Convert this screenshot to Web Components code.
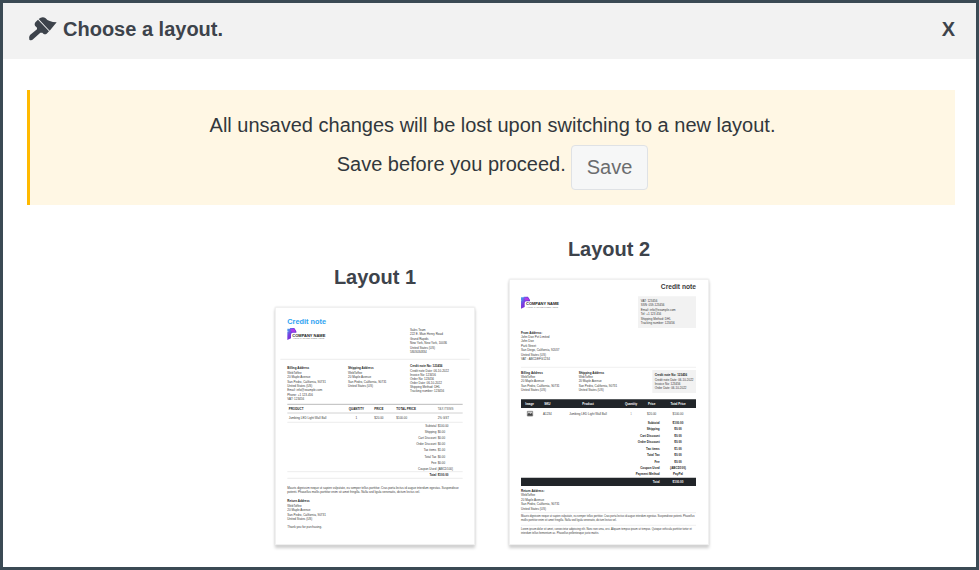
<!DOCTYPE html>
<html lang="en">
<head>
<meta charset="utf-8">
<title>Choose a layout</title>
<style>
    body {
        margin: 0;
        font-family: "Liberation Sans", Arial, sans-serif;
        font-size: 20px;
        color: #32373c;
        --frame-color: #3b4a54;
        --heading-color: #3d434b;
    }
</style>
</head>
<body>
<layout-dialog>
    <span slot="title">Choose a layout.</span>
    <save-notice>
        <span slot="message">All unsaved changes will be lost upon switching to a new layout.</span>
        <span slot="hint">Save before you proceed.</span>
    </save-notice>
    <layout-list>
        <layout-card>
            <span slot="name">Layout 1</span>
            <credit-note-plain></credit-note-plain>
        </layout-card>
        <layout-card>
            <span slot="name">Layout 2</span>
            <credit-note-dark></credit-note-dark>
        </layout-card>
    </layout-list>
</layout-dialog>

<script>
class LayoutDialog extends HTMLElement {

    constructor() {
        super();

        this.attachShadow({ mode: 'open' });
        this.shadowRoot.innerHTML = `
            <style>
                :host {
                    display: block;
                    box-sizing: border-box;
                    min-height: 100vh;
                    border: 3px solid var(--frame-color);
                    background-color: #fff;
                }
                header {
                    display: flex;
                    align-items: center;
                    gap: 6px;
                    box-sizing: border-box;
                    height: 56px;
                    padding: 0 21px 4px 24px;
                    background-color: #f2f2f2;
                    color: var(--heading-color);
                }
                h1 {
                    flex: 1;
                    margin: 0;
                    font-size: 20px;
                    line-height: 24px;
                }
                svg {
                    width: 30px;
                    height: 26px;
                }
                button {
                    border: 0;
                    padding: 0;
                    background: none;
                    color: inherit;
                    font: bold 20px/24px "Liberation Sans", Arial, sans-serif;
                    cursor: pointer;
                }
                main {
                    padding: 31px 21px 20px 24px;
                }
            </style>
            <header>
                <svg viewBox="0 0 90 78" fill="currentColor" aria-hidden="true">
                    <path d="M35 9 41 5Q49 1 56 7Q64 18 89 19L68 44Z" />
                    <path d="M33 11 66 46 59 53Q54 57 49 53L46 50 40 50 19 69Q13 75 7 71Q4 64 9 57L30 40V35L24 29Q21 24 25 19Z" />
                </svg>
                <h1><slot name="title"></slot></h1>
                <button type="button" aria-label="Close">X</button>
            </header>
            <main><slot></slot></main>
        `;
    }
}

class SaveNotice extends HTMLElement {

    constructor() {
        super();

        this.attachShadow({ mode: 'open' });
        this.shadowRoot.innerHTML = `
            <style>
                :host {
                    display: block;
                    padding: 16px 0 15px;
                    border-left: 3px solid #ffb900;
                    background-color: #fff7e4;
                    text-align: center;
                }
                p {
                    margin: 0;
                    line-height: 39px;
                }
                .row {
                    display: flex;
                    justify-content: center;
                    gap: 5px;
                }
                button {
                    box-sizing: border-box;
                    height: 45px;
                    padding: 0 15px;
                    border: 1px solid #dfe2e5;
                    border-radius: 4px;
                    background-color: #f6f7f7;
                    color: #6b6c6e;
                    font: 20px "Liberation Sans", Arial, sans-serif;
                    cursor: pointer;
                }
            </style>
            <p><slot name="message"></slot></p>
            <div class="row">
                <p><slot name="hint"></slot></p>
                <button type="button">Save</button>
            </div>
        `;
    }
}

class LayoutList extends HTMLElement {

    constructor() {
        super();

        this.attachShadow({ mode: 'open' });
        this.shadowRoot.innerHTML = `
            <style>
                :host {
                    display: flex;
                    flex-wrap: wrap;
                    justify-content: center;
                    align-items: flex-end;
                    gap: 34px;
                    padding: 32px 0 0 2px;
                }
            </style>
            <slot></slot>
        `;
    }
}

class LayoutCard extends HTMLElement {

    constructor() {
        super();

        this.attachShadow({ mode: 'open' });
        this.shadowRoot.innerHTML = `
            <style>
                :host {
                    display: block;
                    width: 200px;
                }
                h2 {
                    margin: 0 0 18px;
                    color: var(--heading-color);
                    font-size: 20px;
                    line-height: 24px;
                    text-align: center;
                }
                button {
                    display: block;
                    box-sizing: border-box;
                    width: 100%;
                    padding: 0;
                    border: 0;
                    background-color: #fff;
                    box-shadow: inset 0 0 0 1px #f0f0f0, 0 0 2px #ddd, 0 3px 3px #ccc;
                    font: inherit;
                    cursor: pointer;
                }
            </style>
            <h2 id="name"><slot name="name"></slot></h2>
            <button type="button" aria-labelledby="name"><slot></slot></button>
        `;
    }
}

// The previews are drawn three units to the pixel.
const previewStyle = `
    :host {
        display: block;
    }
    svg {
        display: block;
        width: 100%;
        font-family: "Liberation Sans", Arial, sans-serif;
        font-size: 9px;
        fill: #3a3a3a;
    }
    .bold { font-weight: bold; fill: #222; }
    .title { font-size: 22px; font-weight: bold; }
    .end { text-anchor: end; }
    .mid { text-anchor: middle; }
    .light { fill: #999; }
    .white { fill: #fff; font-weight: bold; }
    .small { font-size: 8px; }
    .brand { font-size: 12px; font-weight: bold; fill: #222; }
    .tagline { font-size: 7px; fill: #888; }
`;

const lines = (x, y, step, rows, name = '') => rows.map((row, i) =>
    `<text x="${x}" y="${y + Math.round(i * step)}" class="${name}">${row}</text>`
).join('');

const cells = (y, row, name = '') => row.map(([x, text, extra = '']) =>
    `<text x="${x}" y="${y}" class="${name} ${extra}">${text}</text>`
).join('');

const logo = (x, y) => `
    <g transform="translate(${x} ${y})">
        <defs>
            <linearGradient id="mark" x1="0" y1="0" x2="1" y2="1">
                <stop offset="0" stop-color="#3cb4f0" />
                <stop offset=".4" stop-color="#7a3be0" />
                <stop offset="1" stop-color="#6a1fb5" />
            </linearGradient>
        </defs>
        <path fill="url(#mark)" d="M0 2H8V10H0ZM8 0H21L27 10V14H16Q11 14 11 20V31L0 36V11L8 9Z" />
        <path fill="#b13be8" d="M9 3H20L25 11H13Z" />
        <text x="15" y="26" class="brand">COMPANY NAME</text>
        <text x="16" y="34" class="tagline">YOUR TAGLINE GOES HERE</text>
    </g>
`;

class CreditNotePlain extends HTMLElement {

    constructor() {
        super();

        this.attachShadow({ mode: 'open' });
        this.shadowRoot.innerHTML = `
            <style>${previewStyle}
                .title { fill: #2ea3f2; }
            </style>
            <svg viewBox="0 0 600 714">
                <text x="37" y="51" class="title">Credit note</text>
                ${logo(37, 63)}
                ${lines(405, 71, 13.4, ['Sales Team', '222 E. Main Henry Road', 'Grand Rapids', 'New York, New York, 10036', 'United States (US)', '5803034834'])}
                <path stroke="#e4e4e4" stroke-width="2" d="M16 157H584" />

                ${lines(37, 185, 13, ['Billing Address'], 'bold')}
                ${lines(37, 201, 13, ['WebToffee', '20 Maple Avenue', 'San Pedro, California, 90731', 'United States (US)', 'Email: info@example.com', 'Phone: +1 123-456', 'VAT: 123456'])}
                ${lines(219, 185, 13, ['Shipping Address'], 'bold')}
                ${lines(219, 201, 13, ['WebToffee', '20 Maple Avenue', 'San Pedro, California, 90731', 'United States (US)'])}
                ${lines(405, 181, 12, ['Credit note No: 123456'], 'bold')}
                ${lines(405, 194, 12, ['Credit note Date: 06-10-2022', 'Invoice No: 123456', 'Order No: 123456', 'Order Date: 06-10-2022', 'Shipping Method: DHL', 'Tracking number: 123456'])}

                <path stroke="#999" stroke-width="2" d="M37 292H563" />
                ${cells(310, [[41, 'PRODUCT'], [244, 'QUANTITY', 'mid'], [298, 'PRICE'], [364, 'TOTAL PRICE'], [488, 'TAX ITEMS', 'light']], 'bold')}
                <path stroke="#bbb" stroke-width="2" d="M37 318H563" />
                ${cells(337, [[41, 'Jumbing LED Light Wall Ball'], [244, '1', 'mid'], [298, '$20.00'], [364, '$100.00'], [488, '2% GST']])}
                <path stroke="#e4e4e4" stroke-width="2" d="M37 346H563" />

                ${lines(484, 359, 18.6, ['Subtotal', 'Shipping', 'Cart Discount', 'Order Discount', 'Tax items', 'Total Tax', 'Fee', 'Coupon Used'], 'end')}
                ${lines(488, 359, 18.6, ['$100.00', '$0.00', '$0.00', '$0.00', '$1.00', '$0.00', '$0.00', '{ABCD100}'])}
                <path stroke="#e4e4e4" stroke-width="2" d="M37 494H563M37 514H563" />
                ${cells(508, [[484, 'Total', 'end'], [488, '$100.00']], 'bold')}

                ${lines(37, 545, 14, ['Mauris dignissim neque ut sapien vulputate, eu semper tellus porttitor. Cras porta lectus id augue interdum egestas. Suspendisse', 'potenti. Phasellus mollis porttitor enim sit amet fringilla. Nulla sed ligula venenatis, dictum lectus vel.'])}
                ${lines(37, 585, 14, ['Return Address'], 'bold')}
                ${lines(37, 600, 13.4, ['WebToffee', '20 Maple Avenue', 'San Pedro, California, 90731', 'United States (US)'])}
                ${lines(37, 662, 13, ['Thank you for purchasing.'])}
            </svg>
        `;
    }
}

class CreditNoteDark extends HTMLElement {

    constructor() {
        super();

        this.attachShadow({ mode: 'open' });
        this.shadowRoot.innerHTML = `
            <style>${previewStyle}
                .title { font-size: 20px; }
                .bar { fill: #212529; }
                .box { fill: #f2f2f2; }
            </style>
            <svg viewBox="0 0 600 798">
                <text x="561" y="30" class="title end">Credit note</text>
                ${logo(36, 53)}
                <path class="box" d="M387 52H561V147H387Z" />
                ${lines(395, 69, 13.4, ['VAT: 123456', 'SSN: 059-123456', 'Email: info@example.com', 'Tel: +1 123 456', 'Shipping Method: DHL', 'Tracking number: 123456'])}

                ${lines(36, 164, 13, ['From Address:'], 'bold')}
                ${lines(36, 177, 13.2, ['John Doe Pvt Limited', 'John Doe', 'Park Street', 'San Diego, California, 92037', 'United States (US)', 'VAT : ABCDEFG1234'])}
                <path stroke="#e8e8e8" stroke-width="2" d="M36 265H561" />

                ${lines(36, 284, 13, ['Billing Address'], 'bold')}
                ${lines(36, 297, 13.2, ['WebToffee', '20 Maple Avenue', 'San Pedro, California, 90731', 'United States (US)'])}
                ${lines(209, 284, 13, ['Shipping Address'], 'bold')}
                ${lines(209, 297, 13.2, ['WebToffee', '20 Maple Avenue', 'San Pedro, California, 90731', 'United States (US)'])}
                <path class="box" d="M430 273H561V342H430Z" />
                ${lines(437, 291, 13, ['Credit note No: 123456'], 'bold')}
                ${lines(437, 305, 13.2, ['Credit note Date: 06-10-2022', 'Invoice No: 123456', 'Order Date: 06-10-2022'])}

                <path class="bar" d="M36 361H561V387H36Z" />
                ${cells(377, [[62, 'Image'], [115, 'SKU'], [237, 'Product'], [366, 'Quantity'], [428, 'Price'], [507, 'Total Price']], 'white mid')}
                <path fill="#ccc" stroke="#666" stroke-width="2" d="M55 397H71V411H55Z" />
                <path fill="#444" d="M56 410V405L60 401 64 405 68 402 70 405V410Z" />
                ${cells(408, [[115, 'A1234'], [237, 'Jumbing LED Light Wall Ball'], [366, '1', 'light'], [428, '$20.00'], [507, '$100.00']], 'mid')}

                ${lines(452, 435, 19.3, ['Subtotal', 'Shipping', 'Cart Discount', 'Order Discount', 'Tax items', 'Total Tax', 'Fee', 'Coupon Used', 'Payment Method'], 'bold end')}
                ${lines(507, 435, 19.3, ['$100.00', '$0.00', '$0.00', '$0.00', '$1.00', '$0.00', '$0.00', '{ABCD100}', 'PayPal'], 'bold mid')}
                <path class="bar" d="M36 596H561V621H36Z" />
                ${cells(612, [[452, 'Total', 'end'], [507, '$100.00', 'mid']], 'white')}

                ${lines(36, 638, 13, ['Return Address:'], 'bold')}
                ${lines(36, 652, 13.2, ['WebToffee', '20 Maple Avenue', 'San Pedro, California, 90731', 'United States (US)'])}
                <path stroke="#e8e8e8" stroke-width="2" d="M36 701H561M36 739H561" />
                ${lines(36, 714, 13, ['Mauris dignissim neque ut sapien vulputate, eu semper tellus porttitor. Cras porta lectus id augue interdum egestas. Suspendisse potenti. Phasellus', 'mollis porttitor enim sit amet fringilla. Nulla sed ligula venenatis, dictum lectus vel.'], 'small')}
                ${lines(36, 752, 13, ['Lorem ipsum dolor sit amet, consectetur adipiscing elit. Nunc non urna, orci. Aliquam tempus ipsum ut tempus. Quisque vehicula porttitor tortor et', 'interdum tellus fermentum ac. Phasellus pellentesque justo mattis.'], 'small')}
            </svg>
        `;
    }
}

window.customElements.define('layout-dialog', LayoutDialog);
window.customElements.define('save-notice', SaveNotice);
window.customElements.define('layout-list', LayoutList);
window.customElements.define('layout-card', LayoutCard);
window.customElements.define('credit-note-plain', CreditNotePlain);
window.customElements.define('credit-note-dark', CreditNoteDark);
</script>
</body>
</html>
